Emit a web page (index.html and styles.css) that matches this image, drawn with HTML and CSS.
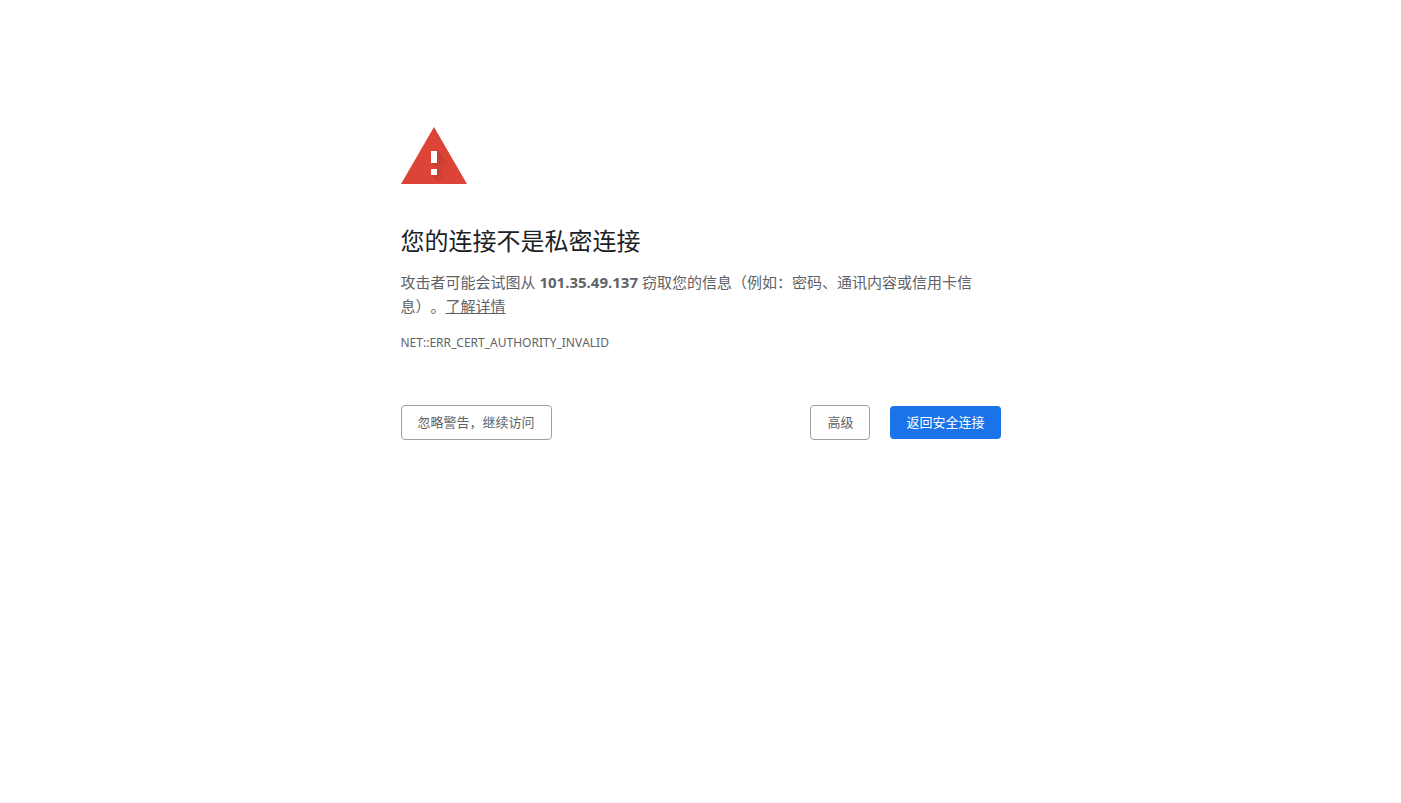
FILE: index.html
```html
<!DOCTYPE html>
<html lang="zh-CN">
<head>
  <meta charset="UTF-8">
  <meta name="viewport" content="width=device-width, initial-scale=1">
  <title>隐私设置错误</title>
  <link rel="stylesheet" href="styles.css">
</head>
<body>
  <main class="interstitial">
    <!-- Warning icon -->
    <svg class="icon" viewBox="0 0 66 57" aria-hidden="true">
      <defs>
        <linearGradient id="shadow" x1="33" y1="27" x2="48" y2="42" gradientUnits="userSpaceOnUse">
          <stop offset="0" stop-color="#a8352a" stop-opacity="0.6"/>
          <stop offset="1" stop-color="#a8352a" stop-opacity="0"/>
        </linearGradient>
        <linearGradient id="shadow-dot" x1="33" y1="45" x2="42" y2="54" gradientUnits="userSpaceOnUse">
          <stop offset="0" stop-color="#a8352a" stop-opacity="0.6"/>
          <stop offset="1" stop-color="#a8352a" stop-opacity="0"/>
        </linearGradient>
      </defs>
      <path fill="#db4437" d="M33 0 66 57H0z"/>
      <path fill="url(#shadow)" d="M36 24 52 40 61 57H51L30 36z"/>
      <path fill="url(#shadow-dot)" d="M36 42 51 57H39L30 48z"/>
      <path fill="#fff" d="M30 24h6v12h-6zM30 42h6v6h-6z"/>
    </svg>

    <h1>您的连接不是私密连接</h1>
    <p class="message">攻击者可能会试图从 <strong>101.35.49.137</strong> 窃取您的信息（例如：密码、通讯内容或信用卡信息）。<a href="#">了解详情</a></p>
    <div class="error-code">NET::ERR_CERT_AUTHORITY_INVALID</div>

    <div class="nav-wrapper">
      <button class="btn btn-secondary" type="button">忽略警告，继续访问</button>
      <div class="nav-right">
        <button class="btn btn-secondary" type="button">高级</button>
        <button class="btn btn-primary" type="button">返回安全连接</button>
      </div>
    </div>
  </main>
</body>
</html>
```

FILE: styles.css
```css
:root {
  --text-color: #5f6368;
  --heading-color: #202124;
  --border-color: #9aa0a6;
  --primary-color: #1a73e8;
}

* {
  box-sizing: border-box;
}

body {
  margin: 0;
  background: #fff;
  color: var(--text-color);
  font-family: "Open Sans", "Noto Sans CJK SC", sans-serif;
  font-size: 15px;
  line-height: 24px;
  text-spacing-trim: space-all;
}

.interstitial {
  max-width: 600px;
  margin: 0 auto;
  padding-top: 127px;
}

.icon {
  display: block;
  width: 66px;
  height: 57px;
  margin-bottom: 42px;
}

h1 {
  margin: 0 0 14px;
  color: var(--heading-color);
  font-size: 24px;
  font-weight: 400;
  line-height: 30px;
}

.message {
  margin: 0 0 13px;
}

.message a {
  color: inherit;
}

.error-code {
  font-family: "Noto Sans", sans-serif;
  font-size: 12px;
  font-kerning: none;
}

/* Buttons */
.nav-wrapper {
  display: flex;
  justify-content: space-between;
  align-items: center;
  margin-top: 50px;
}

.nav-right {
  display: flex;
  align-items: center;
  gap: 20px;
}

.btn {
  padding: 8px 16px;
  border: 0;
  border-radius: 4px;
  font-family: inherit;
  font-size: 13px;
  line-height: 17px;
  cursor: pointer;
}

.btn-secondary {
  border: 1px solid var(--border-color);
  background: #fff;
  color: var(--text-color);
}

.btn-primary {
  background: var(--primary-color);
  color: #fff;
}

@media (max-width: 640px) {
  .interstitial {
    padding: 60px 24px 0;
  }

  .nav-wrapper {
    flex-wrap: wrap;
    gap: 16px;
  }
}
```
